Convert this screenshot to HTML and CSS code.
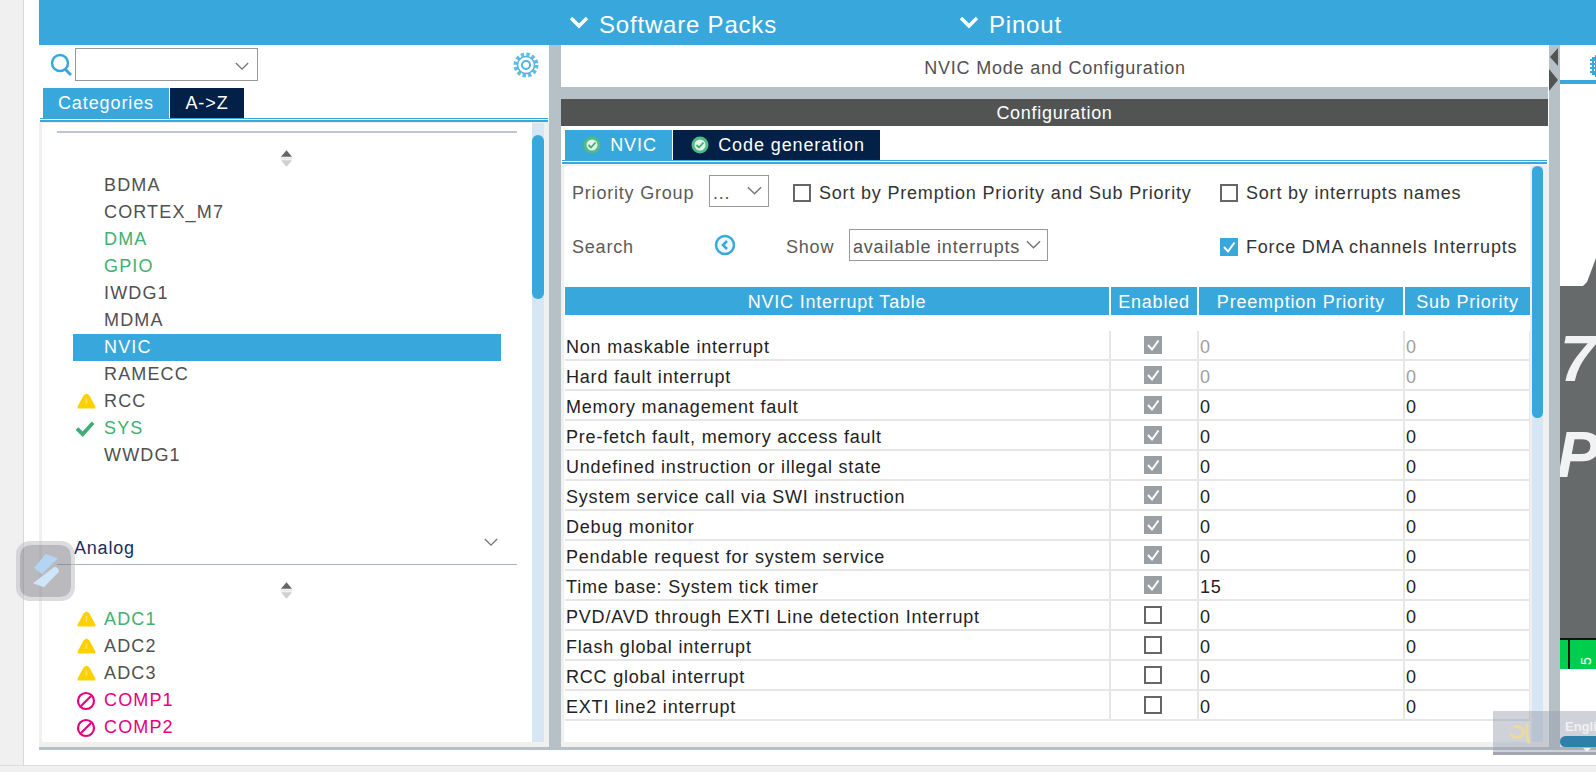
FILE: index.html
```html
<!DOCTYPE html>
<html lang="en">

<head>
  <meta charset="UTF-8">
  <title>NVIC Mode and Configuration</title>
  <link rel="stylesheet" href="styles.css">
</head>

<body>
  <svg class="defs" width="0" height="0">
    <symbol id="warn" viewBox="0 0 20 16">
      <path d="M10 0 L13 2 L19.500 14 L19 16 L1 16 L0.500 14 L7 2 Z" fill="#ffd000" />
      <path d="M10 5 V11" stroke="#ffe566" stroke-width="1.500" />
    </symbol>
    <symbol id="ban" viewBox="0 0 20 20">
      <circle cx="10" cy="10" r="8" fill="none" stroke="#e6007e" stroke-width="2.200" />
      <path d="M5 15 L15 5" stroke="#e6007e" stroke-width="2.200" />
    </symbol>
    <symbol id="ok" viewBox="0 0 20 18">
      <path d="M1 9 L7 15 L18 3" fill="none" stroke="#3fae74" stroke-width="4" />
    </symbol>
    <symbol id="sort" viewBox="0 0 14 18">
      <path d="M7 0 L13 7 H1 Z" fill="#666" />
      <path d="M1 8 H13 V10 H1 Z" fill="#e4e4e4" />
      <path d="M1 11 H13 L7 18 Z" fill="#cfcfcf" />
    </symbol>
    <symbol id="chev" viewBox="0 0 16 10">
      <path d="M1 1 L8 8 L15 1" fill="none" stroke="#777" stroke-width="1.600" />
    </symbol>
    <symbol id="chev-white" viewBox="0 0 20 13">
      <path d="M2 2 L10 10 L18 2" fill="none" stroke="#fff" stroke-width="3.500" />
    </symbol>
    <symbol id="badge" viewBox="0 0 18 18">
      <circle cx="9" cy="9" r="8.500" fill="#4dbd82" />
      <circle cx="9" cy="9" r="5.500" fill="#e4f3ec" />
      <path d="M5.500 9 L8 11.500 L12.500 6.500" fill="none" stroke="#3fae74" stroke-width="1.800" />
    </symbol>
    <symbol id="tick" viewBox="0 0 18 18">
      <path d="M4 9 L8 13.500 L14.500 4.500" fill="none" stroke="#fff" stroke-width="2" />
    </symbol>
  </svg>

  <div class="page">
    <div class="gutter"></div>
    <div class="window">
      <header class="topbar">
        <div class="topbar-item item-packs"><svg class="top-chev"><use href="#chev-white" /></svg><span>Software Packs</span></div>
        <div class="topbar-item"><svg class="top-chev"><use href="#chev-white" /></svg><span>Pinout</span></div>
      </header>

      <main class="workspace">
        <!-- left side: peripheral tree -->
        <section class="side">
          <div class="side-search">
            <svg class="search-icon" viewBox="0 0 22 24">
              <circle cx="10" cy="10" r="8" fill="none" stroke="#38a8dc" stroke-width="2.500" />
              <path d="M15 16 L21 22" stroke="#38a8dc" stroke-width="3" />
            </svg>
            <div class="combo"><svg class="combo-chev"><use href="#chev" /></svg></div>
            <svg class="gear" viewBox="0 0 26 26">
              <circle cx="13" cy="13" r="10.500" fill="none" stroke="#62bbe4" stroke-width="4" stroke-dasharray="3.300 2.200" />
              <circle cx="13" cy="13" r="8.500" fill="none" stroke="#4fb2e0" stroke-width="1.500" />
              <circle cx="13" cy="13" r="4" fill="none" stroke="#4fb2e0" stroke-width="2" />
            </svg>
          </div>
          <div class="side-tabs">
            <div class="tab tab-on tab-categories">Categories</div>
            <div class="tab tab-off tab-az">A-&gt;Z</div>
          </div>
          <div class="rule-double"></div>
          <div class="side-body">
            <div class="tree">
              <div class="tree-rule"></div>
              <svg class="sort"><use href="#sort" /></svg>
              <ul class="periph-list list-system">
                <li class="periph">BDMA</li>
                <li class="periph">CORTEX_M7</li>
                <li class="periph is-green">DMA</li>
                <li class="periph is-green">GPIO</li>
                <li class="periph">IWDG1</li>
                <li class="periph">MDMA</li>
                <li class="periph is-selected">NVIC</li>
                <li class="periph">RAMECC</li>
                <li class="periph"><svg class="pi pi-warn"><use href="#warn" /></svg>RCC</li>
                <li class="periph is-green"><svg class="pi pi-ok"><use href="#ok" /></svg>SYS</li>
                <li class="periph">WWDG1</li>
              </ul>
              <div class="group-head">Analog<svg class="group-chev"><use href="#chev" /></svg></div>
              <svg class="sort sort-second"><use href="#sort" /></svg>
              <ul class="periph-list">
                <li class="periph is-green"><svg class="pi pi-warn"><use href="#warn" /></svg>ADC1</li>
                <li class="periph"><svg class="pi pi-warn"><use href="#warn" /></svg>ADC2</li>
                <li class="periph"><svg class="pi pi-warn"><use href="#warn" /></svg>ADC3</li>
                <li class="periph is-pink"><svg class="pi pi-ban"><use href="#ban" /></svg>COMP1</li>
                <li class="periph is-pink"><svg class="pi pi-ban"><use href="#ban" /></svg>COMP2</li>
              </ul>
            </div>
            <div class="scroll scroll-side"><div class="thumb"></div></div>
          </div>
        </section>

        <div class="split"></div>

        <!-- center: NVIC configuration -->
        <section class="center">
          <div class="mode-title">NVIC Mode and Configuration</div>
          <div class="conf-title">Configuration</div>
          <div class="conf-tabs">
            <div class="tab tab-on tab-nvic"><svg class="tab-badge"><use href="#badge" /></svg>NVIC</div>
            <div class="tab tab-off tab-code"><svg class="tab-badge"><use href="#badge" /></svg>Code generation</div>
          </div>
          <div class="rule-double"></div>
          <div class="conf-body">
            <div class="conf-pane">
              <div class="opts opts-one">
                <span class="opt-label label-group">Priority Group</span>
                <div class="select select-group"><span>...</span><svg class="select-chev"><use href="#chev" /></svg></div>
                <span class="box"></span>
                <span class="opt-text text-premption">Sort by Premption Priority and Sub Priority</span>
                <span class="box"></span>
                <span class="opt-text">Sort by interrupts names</span>
              </div>
              <div class="opts opts-two">
                <span class="opt-label label-search">Search</span>
                <svg class="back-icon" viewBox="0 0 22 22">
                  <circle cx="11" cy="11" r="9" fill="#eef7fc" stroke="#38a8dc" stroke-width="2.500" />
                  <path d="M13 7 L9 11 L13 15" fill="none" stroke="#38a8dc" stroke-width="2.500" />
                </svg>
                <span class="opt-label label-show">Show</span>
                <div class="select select-show"><span>available interrupts</span><svg class="select-chev"><use href="#chev" /></svg></div>
                <span class="box box-on"><svg class="box-tick"><use href="#tick" /></svg></span>
                <span class="opt-text">Force DMA channels Interrupts</span>
              </div>

              <div class="nvic-head">
                <div>NVIC Interrupt Table</div>
                <div>Enabled</div>
                <div>Preemption Priority</div>
                <div>Sub Priority</div>
              </div>
              <div class="nvic-rows">
                <div class="nvic-row"><div>Non maskable interrupt</div><div class="cell-check"><span class="box box-grey"><svg class="box-tick"><use href="#tick" /></svg></span></div><div class="cell-off">0</div><div class="cell-off">0</div></div>
                <div class="nvic-row"><div>Hard fault interrupt</div><div class="cell-check"><span class="box box-grey"><svg class="box-tick"><use href="#tick" /></svg></span></div><div class="cell-off">0</div><div class="cell-off">0</div></div>
                <div class="nvic-row"><div>Memory management fault</div><div class="cell-check"><span class="box box-grey"><svg class="box-tick"><use href="#tick" /></svg></span></div><div>0</div><div>0</div></div>
                <div class="nvic-row"><div>Pre-fetch fault, memory access fault</div><div class="cell-check"><span class="box box-grey"><svg class="box-tick"><use href="#tick" /></svg></span></div><div>0</div><div>0</div></div>
                <div class="nvic-row"><div>Undefined instruction or illegal state</div><div class="cell-check"><span class="box box-grey"><svg class="box-tick"><use href="#tick" /></svg></span></div><div>0</div><div>0</div></div>
                <div class="nvic-row"><div>System service call via SWI instruction</div><div class="cell-check"><span class="box box-grey"><svg class="box-tick"><use href="#tick" /></svg></span></div><div>0</div><div>0</div></div>
                <div class="nvic-row"><div>Debug monitor</div><div class="cell-check"><span class="box box-grey"><svg class="box-tick"><use href="#tick" /></svg></span></div><div>0</div><div>0</div></div>
                <div class="nvic-row"><div>Pendable request for system service</div><div class="cell-check"><span class="box box-grey"><svg class="box-tick"><use href="#tick" /></svg></span></div><div>0</div><div>0</div></div>
                <div class="nvic-row"><div>Time base: System tick timer</div><div class="cell-check"><span class="box box-grey"><svg class="box-tick"><use href="#tick" /></svg></span></div><div>15</div><div>0</div></div>
                <div class="nvic-row"><div>PVD/AVD through EXTI Line detection Interrupt</div><div class="cell-check"><span class="box"></span></div><div>0</div><div>0</div></div>
                <div class="nvic-row"><div>Flash global interrupt</div><div class="cell-check"><span class="box"></span></div><div>0</div><div>0</div></div>
                <div class="nvic-row"><div>RCC global interrupt</div><div class="cell-check"><span class="box"></span></div><div>0</div><div>0</div></div>
                <div class="nvic-row"><div>EXTI line2 interrupt</div><div class="cell-check"><span class="box"></span></div><div>0</div><div>0</div></div>
              </div>
            </div>
            <div class="scroll scroll-conf"><div class="thumb"></div></div>
          </div>
        </section>

        <div class="split split-arrows">
          <span class="arrow-left"></span>
          <span class="arrow-right"></span>
        </div>

        <!-- right: chip view, mostly cut off -->
        <section class="pinout">
          <div class="pinout-tab">
            <svg class="chip-icon" viewBox="0 0 10 22">
              <path d="M0 5 H5 M0 9 H5 M0 13 H5 M0 17 H5 M6 0 V22" fill="none" stroke="#38a8dc" stroke-width="2" />
              <path d="M3 3 H10 V19 H3 Z" fill="none" stroke="#38a8dc" stroke-width="2" />
            </svg>
          </div>
          <div class="chip-view">
            <svg class="chip-corner" viewBox="0 0 36 28"><path d="M0 28 H23 L27 24 L36 0 V28 Z" fill="#666a6b" /></svg>
            <div class="chip-body">
              <span class="chip-seven">7</span>
              <span class="chip-p">P</span>
            </div>
            <div class="chip-pins">
              <span class="pin"></span>
              <span class="pin pin-five"><span class="pin-num">5</span></span>
            </div>
          </div>
        </section>
      </main>
      <div class="bottom-bar"></div>
    </div>
  </div>
  <div class="footer-strip"></div>

  <!-- floating desktop widgets -->
  <div class="float-badge">
    <svg class="float-s" viewBox="0 0 26 34">
      <path d="M12.600 0 L25 4.300 L9 20 L0.900 14 Z" fill="#b3d4f2" />
      <path d="M21.500 12.700 C24 13 26 15 26 17.700 L10.900 33.300 L0 29.300 Z" fill="#cfe5f9" />
    </svg>
  </div>
  <div class="lang-bar">
    <svg class="lang-glyph" viewBox="0 0 24 24">
      <path d="M1 11 C4 16 14 17 15 10 C15 5 9 3 5 4 M19 1 C18 8 19 16 21 21" fill="none" stroke="#ecd9a0" stroke-width="3" />
    </svg>
    <span class="lang-name">Engli</span>
    <span class="lang-pill"></span>
    <span class="lang-caret"></span>
  </div>
</body>

</html>
```

FILE: styles.css
```css
/* Base */
* {
  box-sizing: border-box;
}

html,
body {
  margin: 0;
  height: 772px;
  overflow: hidden;
}

body {
  position: relative;
  width: 1596px;
  background: #fff;
  font-family: "Liberation Sans", Arial, sans-serif;
  font-size: 18px;
  letter-spacing: 0.8px;
  color: #505050;
}

ul {
  list-style: none;
  margin: 0;
  padding: 0;
}

svg {
  display: block;
  flex: none;
}

.defs {
  position: absolute;
}

.page {
  display: flex;
  height: 765px;
}

.gutter {
  width: 24px;
  background: #f0f0f0;
  border-right: 1px solid #d9d9d9;
  margin-right: 15px;
}

.window {
  flex: 1;
  min-width: 0;
  display: flex;
  flex-direction: column;
}

.footer-strip {
  height: 7px;
  background: #f0f0f0;
  border-top: 1px solid #dcdcdc;
}

/* Top bar */
.topbar {
  display: flex;
  align-items: center;
  height: 45px;
  flex: none;
  padding-left: 530px;
  background: #38a8dc;
  color: #fff;
  font-size: 24px;
}

.topbar-item {
  display: flex;
  align-items: center;
}

.topbar-item span {
  padding-top: 4px;
}

.item-packs {
  width: 390px;
}

.top-chev {
  width: 20px;
  height: 13px;
  margin-right: 10px;
}

.workspace {
  display: flex;
  height: 702px;
  flex: none;
  background: #f0f0f0;
}

.bottom-bar {
  height: 3px;
  flex: none;
  background: #b5c0c7;
}

/* Left panel */
.side {
  width: 510px;
  flex: none;
  display: flex;
  flex-direction: column;
  background: #fff;
}

.side-search {
  display: flex;
  align-items: center;
  height: 43px;
  padding: 0 0 3px 11px;
  flex: none;
}

.search-icon {
  width: 22px;
  height: 24px;
  margin-right: 3px;
}

.combo {
  position: relative;
  width: 183px;
  height: 33px;
  margin-top: -2px;
  border: 1px solid #999;
}

.combo-chev {
  position: absolute;
  right: 8px;
  top: 13px;
  width: 14px;
  height: 9px;
}

.gear {
  width: 26px;
  height: 26px;
  margin-left: 255px;
}

.side-tabs {
  display: flex;
  height: 30px;
  flex: none;
  padding-left: 4px;
  gap: 1px;
}

.tab {
  display: flex;
  align-items: center;
  justify-content: center;
  color: #fff;
  font-size: 18px;
  letter-spacing: 0.9px;
}

.tab-on {
  background: #38a8dc;
}

.tab-off {
  background: #032047;
}

.tab-categories {
  width: 126px;
}

.tab-az {
  width: 74px;
}

.rule-double {
  height: 4px;
  flex: none;
  border-top: 1px solid #38a8dc;
  border-bottom: 2px solid #38a8dc;
  margin: 0 1px;
}

.side-body {
  flex: 1;
  min-height: 0;
  display: flex;
  padding: 1px 5px 5px 3px;
  background: #f0f0f0;
}

.tree {
  flex: 1;
  min-width: 0;
  background: #fff;
  padding-top: 8px;
  overflow: hidden;
}

.tree-rule {
  height: 2px;
  margin: 0 15px;
  background: #bcc6d6;
}

.sort {
  width: 13px;
  height: 17px;
  margin: 17px 0 0 238px;
}

.sort-second {
  margin-top: 17px;
}

.periph-list {
  margin-top: 7px;
}

.list-system {
  height: 370px;
  margin-top: 5px;
}

.periph {
  position: relative;
  display: flex;
  align-items: center;
  height: 27px;
  margin-left: 31px;
  margin-right: 31px;
  padding-left: 31px;
  letter-spacing: 1.15px;
}

.pi {
  position: absolute;
}

.pi-warn {
  left: 4px;
  top: 5px;
  width: 19px;
  height: 16px;
}

.pi-ban {
  left: 3px;
  top: 4px;
  width: 20px;
  height: 20px;
}

.pi-ok {
  left: 3px;
  top: 5px;
  width: 19px;
  height: 17px;
}

.is-green {
  color: #40b070;
}

.is-pink {
  color: #e6007e;
}

.is-selected {
  background: #38a8dc;
  color: #fff;
}

.group-head {
  position: relative;
  height: 32px;
  margin: -9px 15px 0;
  padding: 5px 0 0 17px;
  color: #1b2d5c;
  border-bottom: 1px solid #aab6bf;
}

.group-chev {
  position: absolute;
  right: 19px;
  top: 5px;
  width: 14px;
  height: 9px;
}

.scroll {
  flex: none;
  background: #d6e6f5;
}

.thumb {
  background: #38a8dc;
  border-radius: 6px;
}

.scroll-side {
  width: 12px;
}

.scroll-side .thumb {
  height: 164px;
  margin-top: 12px;
}

/* Splitters */
.split {
  width: 12px;
  flex: none;
  background: #b5c0c7;
}

.split-arrows {
  width: 11px;
  display: flex;
  flex-direction: column;
}

.arrow-left {
  width: 0;
  height: 0;
  margin: 3px 0 0 1px;
  border-top: 9px solid transparent;
  border-bottom: 9px solid transparent;
  border-right: 8px solid #525454;
}

.arrow-right {
  width: 0;
  height: 0;
  margin-top: 3px;
  border-top: 11px solid transparent;
  border-bottom: 11px solid transparent;
  border-left: 9px solid #525454;
}

/* Center panel */
.center {
  width: 988px;
  flex: none;
  display: flex;
  flex-direction: column;
  background: #fff;
}

.mode-title {
  height: 42px;
  flex: none;
  display: flex;
  align-items: center;
  justify-content: center;
  padding-top: 4px;
}

.conf-title {
  height: 39px;
  flex: none;
  display: flex;
  align-items: center;
  justify-content: center;
  margin-right: 1px;
  padding-top: 1px;
  border-top: 12px solid #b5c0c7;
  background: #525454;
  color: #fff;
  letter-spacing: 0.7px;
}

.conf-tabs {
  display: flex;
  height: 34px;
  flex: none;
  padding: 4px 0 0 4px;
  gap: 1px;
}

.tab-badge {
  width: 18px;
  height: 18px;
  margin-right: 9px;
}

.tab-nvic {
  width: 107px;
  padding-left: 3px;
}

.tab-code {
  width: 207px;
  padding-left: 3px;
}

.conf-tabs + .rule-double {
  margin: 0 2px 0 1px;
}

.conf-body {
  flex: 1;
  min-height: 0;
  display: flex;
  padding: 2px 6px 5px 3px;
  background: #f0f0f0;
}

.conf-pane {
  flex: 1;
  min-width: 0;
  background: #fff;
  overflow: hidden;
  padding-left: 1px;
}

.scroll-conf {
  width: 11px;
  margin-left: 2px;
}

.scroll-conf .thumb {
  height: 252px;
}

.opts {
  display: flex;
  align-items: center;
  height: 32px;
  padding-left: 7px;
}

.opts-one {
  margin-top: 9px;
}

.opts-two {
  margin-top: 22px;
}

.opt-label,
.opt-text {
  padding-top: 5px;
}

.opt-label {
  color: #5a5a5a;
}

.label-group {
  width: 137px;
}

.label-search {
  width: 142px;
}

.label-show {
  width: 63px;
  margin-left: 50px;
}

.opt-text {
  color: #333;
  margin-left: 8px;
}

.text-premption {
  width: 401px;
}

.back-icon {
  width: 22px;
  height: 22px;
}

.select {
  display: flex;
  align-items: center;
  justify-content: space-between;
  height: 32px;
  border: 1px solid #999;
  padding: 0 6px 0 3px;
  color: #555;
}

.select span {
  padding-top: 4px;
}

.select-group {
  width: 60px;
  margin-right: 24px;
}

.select-show {
  width: 199px;
  margin-right: 172px;
}

.select-chev {
  width: 15px;
  height: 10px;
}

.box {
  display: block;
  width: 18px;
  height: 18px;
  flex: none;
  background: #fff;
  border: 2px solid #666;
}

.opts .box {
  margin-top: 4px;
}

.box-on {
  background: #38a8dc;
  border: 0;
}

.box-grey {
  background: #9a9fa3;
  border: 0;
}

.box-tick {
  width: 18px;
  height: 18px;
}

/* NVIC table */
.nvic-head {
  display: grid;
  grid-template-columns: 544px 86px 204px 125px;
  gap: 2px;
  height: 28px;
  margin-top: 26px;
  color: #fff;
}

.nvic-head div {
  display: flex;
  align-items: center;
  justify-content: center;
  padding-top: 2px;
  background: #38a8dc;
}

.nvic-rows {
  margin-top: 16px;
  width: 966px;
}

.nvic-row {
  display: grid;
  grid-template-columns: 546px 88px 206px 126px;
  height: 30px;
  border-bottom: 2px solid #e6e6e6;
  color: #222;
}

.nvic-row div {
  display: flex;
  align-items: center;
  padding: 4px 0 0 1px;
  border-right: 2px solid #e6e6e6;
}

.nvic-row .cell-check {
  padding: 0 0 0 33px;
}

.nvic-row .cell-off {
  color: #a0a0a0;
}

/* Pinout */
.pinout {
  flex: 1;
  min-width: 0;
  background: #fff;
  display: flex;
  flex-direction: column;
}

.pinout-tab {
  height: 39px;
  flex: none;
  border-bottom: 4px solid #38a8dc;
  padding: 10px 0 0 30px;
}

.chip-icon {
  width: 10px;
  height: 22px;
}

.chip-view {
  flex: 1;
  position: relative;
  overflow: hidden;
}

.chip-corner {
  position: absolute;
  left: 0;
  top: 174px;
  width: 36px;
  height: 28px;
}

.chip-body {
  position: absolute;
  left: 0;
  right: 0;
  top: 202px;
  height: 354px;
  background: #666a6b;
  border-bottom: 2px solid #111;
  color: #f1f2f4;
  font-weight: bold;
  font-style: italic;
  font-size: 64px;
  letter-spacing: 0;
}

.chip-seven {
  position: absolute;
  left: 0;
  top: 36px;
}

.chip-p {
  position: absolute;
  left: -3px;
  top: 132px;
}

.chip-pins {
  position: absolute;
  left: 0;
  right: 0;
  top: 556px;
  height: 29px;
  display: flex;
  background: #00ce4c;
}

.pin {
  width: 10px;
  border-right: 2px solid #111;
}

.pin-five {
  width: 26px;
  border-right: 0;
  color: #fff;
  font-size: 14px;
}

.pin-num {
  display: block;
  transform: rotate(-90deg);
  margin-top: 11px;
  width: 12px;
  margin-left: 10px;
}

/* Floating widgets */
.float-badge {
  position: absolute;
  left: 16px;
  top: 541px;
  width: 59px;
  height: 60px;
  display: flex;
  align-items: center;
  justify-content: center;
  background: rgba(115, 115, 125, 0.5);
  background-clip: padding-box;
  border: 4px solid rgba(190, 190, 198, 0.55);
  border-radius: 14px;
}

.float-s {
  width: 26px;
  height: 34px;
}

.lang-bar {
  position: absolute;
  left: 1493px;
  top: 711px;
  width: 103px;
  height: 44px;
  background: rgba(150, 155, 170, 0.45);
  border-bottom: 3px solid rgba(130, 130, 150, 0.55);
  overflow: hidden;
}

.lang-glyph {
  position: absolute;
  left: 16px;
  top: 12px;
  width: 23px;
  height: 23px;
}

.lang-name {
  position: absolute;
  left: 72px;
  top: 8px;
  color: #f0f0f4;
  font-size: 13px;
  font-weight: bold;
  letter-spacing: 0;
}

.lang-pill {
  position: absolute;
  left: 67px;
  top: 25px;
  width: 50px;
  height: 11px;
  border-radius: 6px;
  background: #2d80aa;
}

.lang-caret {
  position: absolute;
  left: 90px;
  top: 37px;
  width: 0;
  height: 0;
  border-left: 4px solid transparent;
  border-right: 4px solid transparent;
  border-top: 4px solid #f0f0f4;
}
```
